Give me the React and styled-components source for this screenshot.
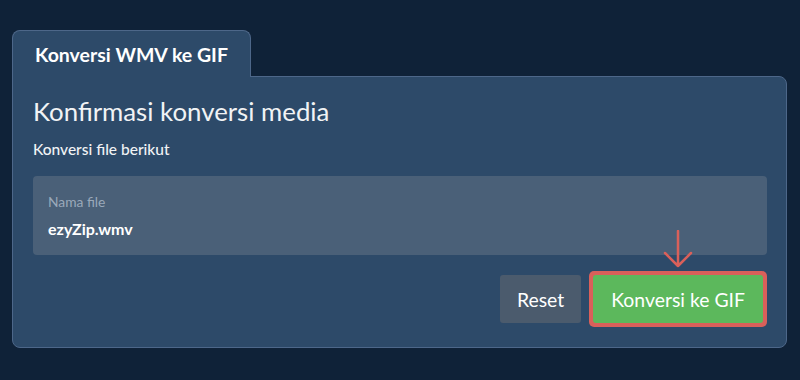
import React from "react"
import styled, { createGlobalStyle } from "styled-components"

const colors = {
  page: "#0f2238",
  panel: "#2d4a69",
  border: "#4d6789",
  field: "#4a6078",
  muted: "#9aa9ba",
  text: "#f1f3f5",
  reset: "#4b5b6d",
  green: "#5cb85c",
  red: "#d9605a",
}

const GlobalStyle = createGlobalStyle`
  html, body {
    margin: 0;
    background: ${colors.page};
  }
  body {
    font-family: Lato, "Open Sans", sans-serif;
    color: ${colors.text};
  }
`

const Page = styled.div`
  padding: 30px 13px 32px 12px;
`

const Tab = styled.div`
  position: relative;
  z-index: 1;
  box-sizing: border-box;
  width: 239px;
  height: 47px;
  margin-bottom: -1px;
  padding: 0 0 0 22px;
  display: flex;
  align-items: center;
  background: ${colors.panel};
  border: 1px solid ${colors.border};
  border-bottom: none;
  border-radius: 8px 8px 0 0;
  font-size: 19.5px;
  font-weight: 700;
  color: #fff;
`

const Panel = styled.div`
  background: ${colors.panel};
  border: 1px solid ${colors.border};
  border-radius: 0 8px 8px 8px;
  padding: 19px 19px 20px 20px;
`

const Heading = styled.h2`
  margin: 0;
  font-size: 25.8px;
  line-height: 31px;
  font-weight: 400;
  color: ${colors.text};
`

const Subtitle = styled.p`
  margin: 13px 0 0;
  font-size: 15.5px;
  line-height: 18px;
  font-weight: 500;
`

const Field = styled.div`
  margin-top: 18px;
  background: ${colors.field};
  border-radius: 4px;
  padding: 17px 15px 17px;
`

const FieldLabel = styled.div`
  font-size: 13.8px;
  line-height: 17px;
  color: ${colors.muted};
`

const FieldValue = styled.div`
  margin-top: 9px;
  font-size: 16px;
  line-height: 19px;
  font-weight: 700;
  color: #fff;
`

const Actions = styled.div`
  margin-top: 16px;
  display: flex;
  justify-content: flex-end;
  align-items: center;
  gap: 8px;
`

const Button = styled.button`
  height: 48px;
  padding: 0 ${(p) => p.$pad}px;
  border: none;
  border-radius: 3px;
  background: ${(p) => p.$bg};
  color: #fff;
  font-family: inherit;
  font-size: 19.4px;
  cursor: pointer;
`

const Highlight = styled.div`
  position: relative;
  display: flex;
  padding: 4px;
  background: ${colors.red};
  border-radius: 5px;
`

const Arrow = styled.svg`
  position: absolute;
  left: 50%;
  bottom: 100%;
  margin-left: -15px;
  margin-bottom: 3px;
`

export default function App() {
  return (
    <>
      <GlobalStyle />
      <Page>
        <Tab>Konversi WMV ke GIF</Tab>
        <Panel>
          <Heading>Konfirmasi konversi media</Heading>
          <Subtitle>Konversi file berikut</Subtitle>
          <Field>
            <FieldLabel>Nama file</FieldLabel>
            <FieldValue>ezyZip.wmv</FieldValue>
          </Field>
          <Actions>
            <Button $bg={colors.reset} $pad={17}>Reset</Button>
            <Highlight>
              <Arrow width="30" height="38" viewBox="0 0 30 38">
                <path
                  d="M15 1 V36 M2 23 L15 36 L28 23"
                  fill="none"
                  stroke={colors.red}
                  strokeWidth="2.5"
                  strokeLinecap="round"
                  strokeLinejoin="round"
                />
              </Arrow>
              <Button $bg={colors.green} $pad={18}>Konversi ke GIF</Button>
            </Highlight>
          </Actions>
        </Panel>
      </Page>
    </>
  )
}
